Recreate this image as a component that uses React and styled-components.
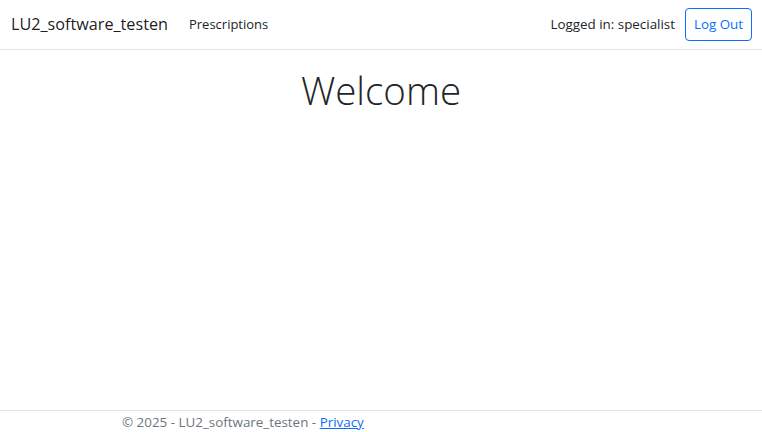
import React from "react";
import styled, { createGlobalStyle } from "styled-components";

const Global = createGlobalStyle`
  html, body { margin: 0; padding: 0; }
  body {
    font-family: "Open Sans", "Noto Sans", sans-serif;
    font-size: 14px;
    line-height: 1.5;
    color: #212529;
    background: #fff;
  }
  * { box-sizing: border-box; }
`;

const Page = styled.div`
  min-height: 100vh;
  display: flex;
  flex-direction: column;
`;

const NavBar = styled.nav`
  display: flex;
  align-items: center;
  justify-content: space-between;
  padding: 7px 10px 7px 11px;
  border-bottom: 1px solid #dee2e6;
  margin-bottom: 14px;
  height: 50px;
`;

const Left = styled.div`
  display: flex;
  align-items: center;
`;

const Brand = styled.a`
  font-size: 16.2px;
  color: rgba(0, 0, 0, 0.9);
  text-decoration: none;
  margin-right: 14px;
  line-height: 1.5;
`;

const NavLink = styled.a`
  padding: 7px;
  font-size: 13px;
  color: #212529;
  text-decoration: none;
`;

const Right = styled.div`
  display: flex;
  align-items: center;
  gap: 10px;
`;

const UserText = styled.span`
  font-size: 13.4px;
  color: #212529;
`;

const OutlineButton = styled.button`
  font-family: inherit;
  font-size: 13.4px;
  line-height: 21px;
  height: 33px;
  width: 67px;
  padding: 0;
  color: #0d6efd;
  background: transparent;
  border: 1px solid #0d6efd;
  border-radius: 4px;
  cursor: pointer;
`;

const Main = styled.main`
  flex: 1;
  text-align: center;
`;

const Title = styled.h1`
  margin: 0;
  padding-top: 3px;
  font-size: 38.5px;
  font-weight: 300;
  line-height: 1.2;
  color: #212529;
`;

const Footer = styled.footer`
  border-top: 1px solid #dee2e6;
  height: 22px;
  line-height: 22px;
  font-size: 13.4px;
  color: #6c757d;
  white-space: nowrap;
`;

const FooterInner = styled.div`
  width: 540px;
  margin: 0 auto;
  padding: 0 11px;
`;

const FooterLink = styled.a`
  color: #0d6efd;
  text-decoration: underline;
`;

export default function App() {
  return (
    <Page>
      <Global />
      <NavBar>
        <Left>
          <Brand href="#">LU2_software_testen</Brand>
          <NavLink href="#">Prescriptions</NavLink>
        </Left>
        <Right>
          <UserText>Logged in: specialist</UserText>
          <OutlineButton>Log Out</OutlineButton>
        </Right>
      </NavBar>
      <Main>
        <Title>Welcome</Title>
      </Main>
      <Footer>
        <FooterInner>
          © 2025 - LU2_software_testen - <FooterLink href="#">Privacy</FooterLink>
        </FooterInner>
      </Footer>
    </Page>
  );
}
